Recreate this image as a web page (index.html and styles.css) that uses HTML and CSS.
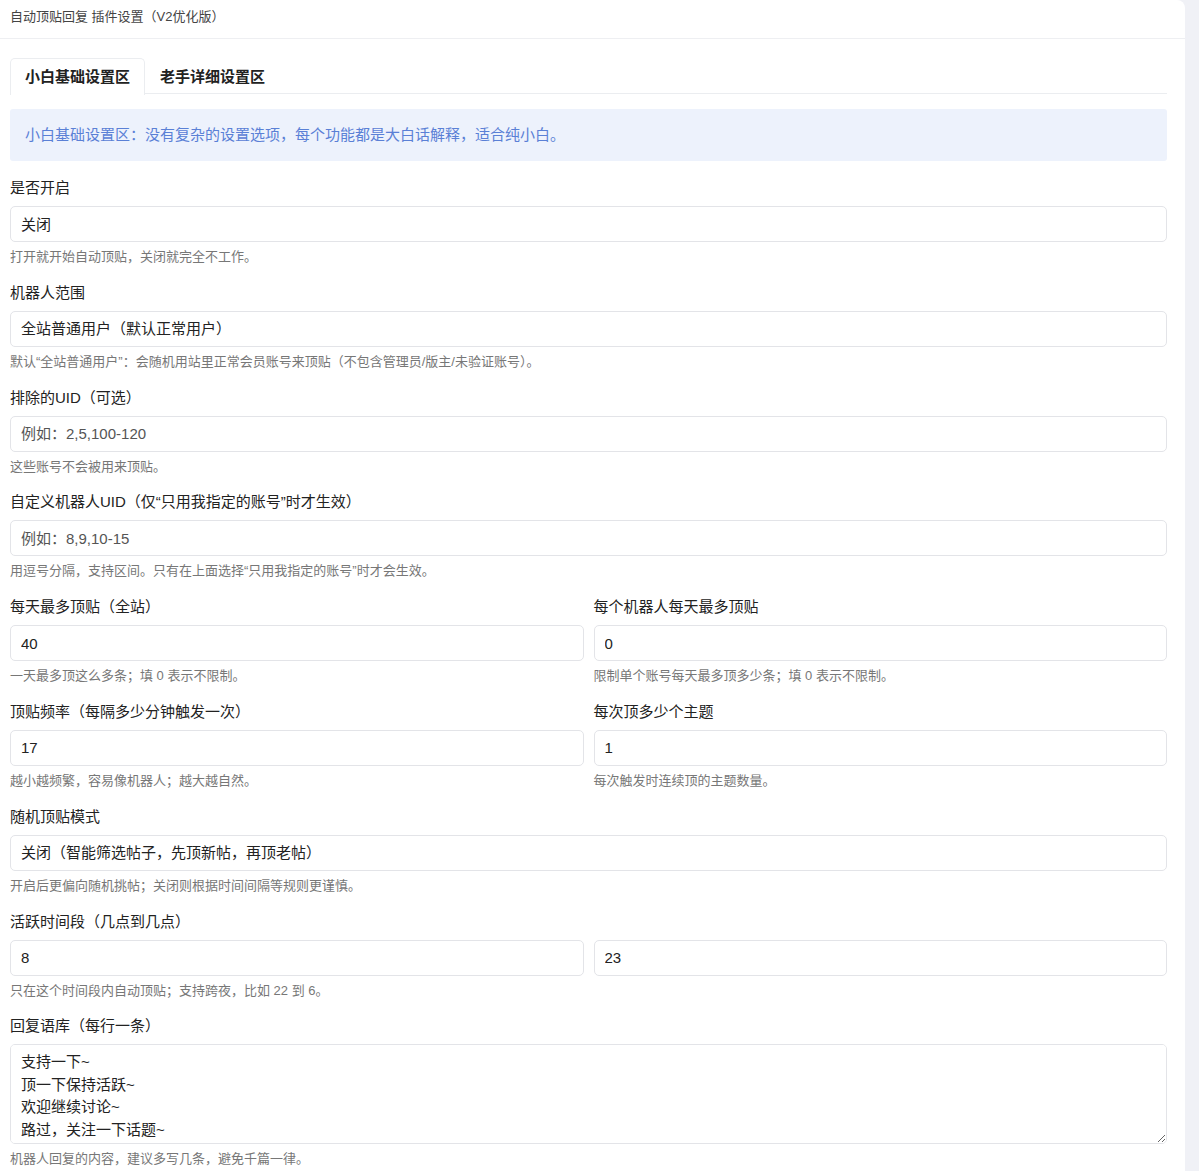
FILE: index.html
```html
<!DOCTYPE html>
<html lang="zh-CN">
<head>
<meta charset="utf-8">
<title>自动顶贴回复 插件设置（V2优化版）</title>
<link rel="stylesheet" href="styles.css">
</head>
<body>
<div class="card">
  <div class="card-header">自动顶贴回复 插件设置（V2优化版）</div>
  <div class="card-body">
    <div class="tabs">
      <div class="tab active">小白基础设置区</div>
      <div class="tab">老手详细设置区</div>
    </div>
    <div class="alert">小白基础设置区：没有复杂的设置选项，每个功能都是大白话解释，适合纯小白。</div>

    <div class="group">
      <label class="label">是否开启</label>
      <select class="control"><option>关闭</option><option>开启</option></select>
      <div class="help">打开就开始自动顶贴，关闭就完全不工作。</div>
    </div>

    <div class="group">
      <label class="label">机器人范围</label>
      <select class="control"><option>全站普通用户（默认正常用户）</option></select>
      <div class="help">默认“全站普通用户”：会随机用站里正常会员账号来顶贴（不包含管理员/版主/未验证账号）。</div>
    </div>

    <div class="group">
      <label class="label">排除的UID（可选）</label>
      <input class="control" type="text" placeholder="例如：2,5,100-120">
      <div class="help">这些账号不会被用来顶贴。</div>
    </div>

    <div class="group">
      <label class="label">自定义机器人UID（仅“只用我指定的账号”时才生效）</label>
      <input class="control" type="text" placeholder="例如：8,9,10-15">
      <div class="help">用逗号分隔，支持区间。只有在上面选择“只用我指定的账号”时才会生效。</div>
    </div>

    <div class="row">
      <div class="group">
        <label class="label">每天最多顶贴（全站）</label>
        <input class="control" type="text" value="40">
        <div class="help">一天最多顶这么多条；填 0 表示不限制。</div>
      </div>
      <div class="group">
        <label class="label">每个机器人每天最多顶贴</label>
        <input class="control" type="text" value="0">
        <div class="help">限制单个账号每天最多顶多少条；填 0 表示不限制。</div>
      </div>
    </div>

    <div class="row">
      <div class="group">
        <label class="label">顶贴频率（每隔多少分钟触发一次）</label>
        <input class="control" type="text" value="17">
        <div class="help">越小越频繁，容易像机器人；越大越自然。</div>
      </div>
      <div class="group">
        <label class="label">每次顶多少个主题</label>
        <input class="control" type="text" value="1">
        <div class="help">每次触发时连续顶的主题数量。</div>
      </div>
    </div>

    <div class="group">
      <label class="label">随机顶贴模式</label>
      <select class="control"><option>关闭（智能筛选帖子，先顶新帖，再顶老帖）</option></select>
      <div class="help">开启后更偏向随机挑帖；关闭则根据时间间隔等规则更谨慎。</div>
    </div>

    <div class="group">
      <label class="label">活跃时间段（几点到几点）</label>
      <div class="pair">
        <input class="control" type="text" value="8">
        <input class="control" type="text" value="23">
      </div>
      <div class="help">只在这个时间段内自动顶贴；支持跨夜，比如 22 到 6。</div>
    </div>

    <div class="group">
      <label class="label">回复语库（每行一条）</label>
      <textarea class="control textarea">支持一下~
顶一下保持活跃~
欢迎继续讨论~
路过，关注一下话题~</textarea>
      <div class="help">机器人回复的内容，建议多写几条，避免千篇一律。</div>
    </div>
  </div>
</div>
</body>
</html>
```

FILE: styles.css
```css
html, body {
  margin: 0;
  padding: 0;
}
body {
  background: #f0f1f6;
  font-family: "Liberation Sans", "Noto Sans CJK SC", sans-serif;
  color: #222;
}
.card {
  width: 1185px;
  background: #fff;
  border-radius: 0 8px 0 0;
  min-height: 1171px;
}
.card-header {
  height: 38px;
  line-height: 34px;
  padding-left: 10px;
  font-size: 13px;
  color: #444;
  border-bottom: 1px solid #eeeff2;
}
.card-body {
  padding: 19px 18px 0 10px;
}
.tabs {
  display: flex;
  border-bottom: 1px solid #ebedf0;
  height: 35px;
}
.tab {
  padding: 0 14px;
  font-size: 15px;
  font-weight: 700;
  line-height: 35px;
  color: #222;
  border: 1px solid transparent;
  border-bottom: none;
  border-radius: 5px 5px 0 0;
}
.tab.active {
  border-color: #ebedf0;
  background: #fff;
  height: 36px;
}
.alert {
  margin-top: 15px;
  background: #edf2fc;
  color: #5a80d6;
  font-size: 15px;
  line-height: 52px;
  height: 52px;
  padding-left: 15px;
  border-radius: 3px;
}
.alert + .group {
  margin-top: 16px;
}
.group {
  display: flex;
  flex-direction: column;
  margin-bottom: 15.8px;
  min-width: 0;
}
.label {
  font-size: 15px;
  line-height: 22px;
  margin-bottom: 7px;
  color: #222;
}
.control {
  box-sizing: border-box;
  width: 100%;
  height: 36px;
  border: 1px solid #e3e4e8;
  border-radius: 5px;
  padding: 0 10px;
  font-family: "Liberation Sans", "Noto Sans CJK SC", sans-serif;
  font-size: 15px;
  color: #222;
  background: #fff;
  outline: none;
  -webkit-appearance: none;
  appearance: none;
}
.control::placeholder {
  color: #555;
}
.textarea {
  height: 100px;
  padding: 6px 10px;
  line-height: 22.5px;
  resize: vertical;
}
.help {
  margin-top: 6px;
  font-size: 13px;
  line-height: 18px;
  color: #777;
}
.row {
  display: grid;
  grid-template-columns: 1fr 1fr;
  column-gap: 10px;
}
.pair {
  display: grid;
  grid-template-columns: 1fr 1fr;
  column-gap: 10px;
}
```
